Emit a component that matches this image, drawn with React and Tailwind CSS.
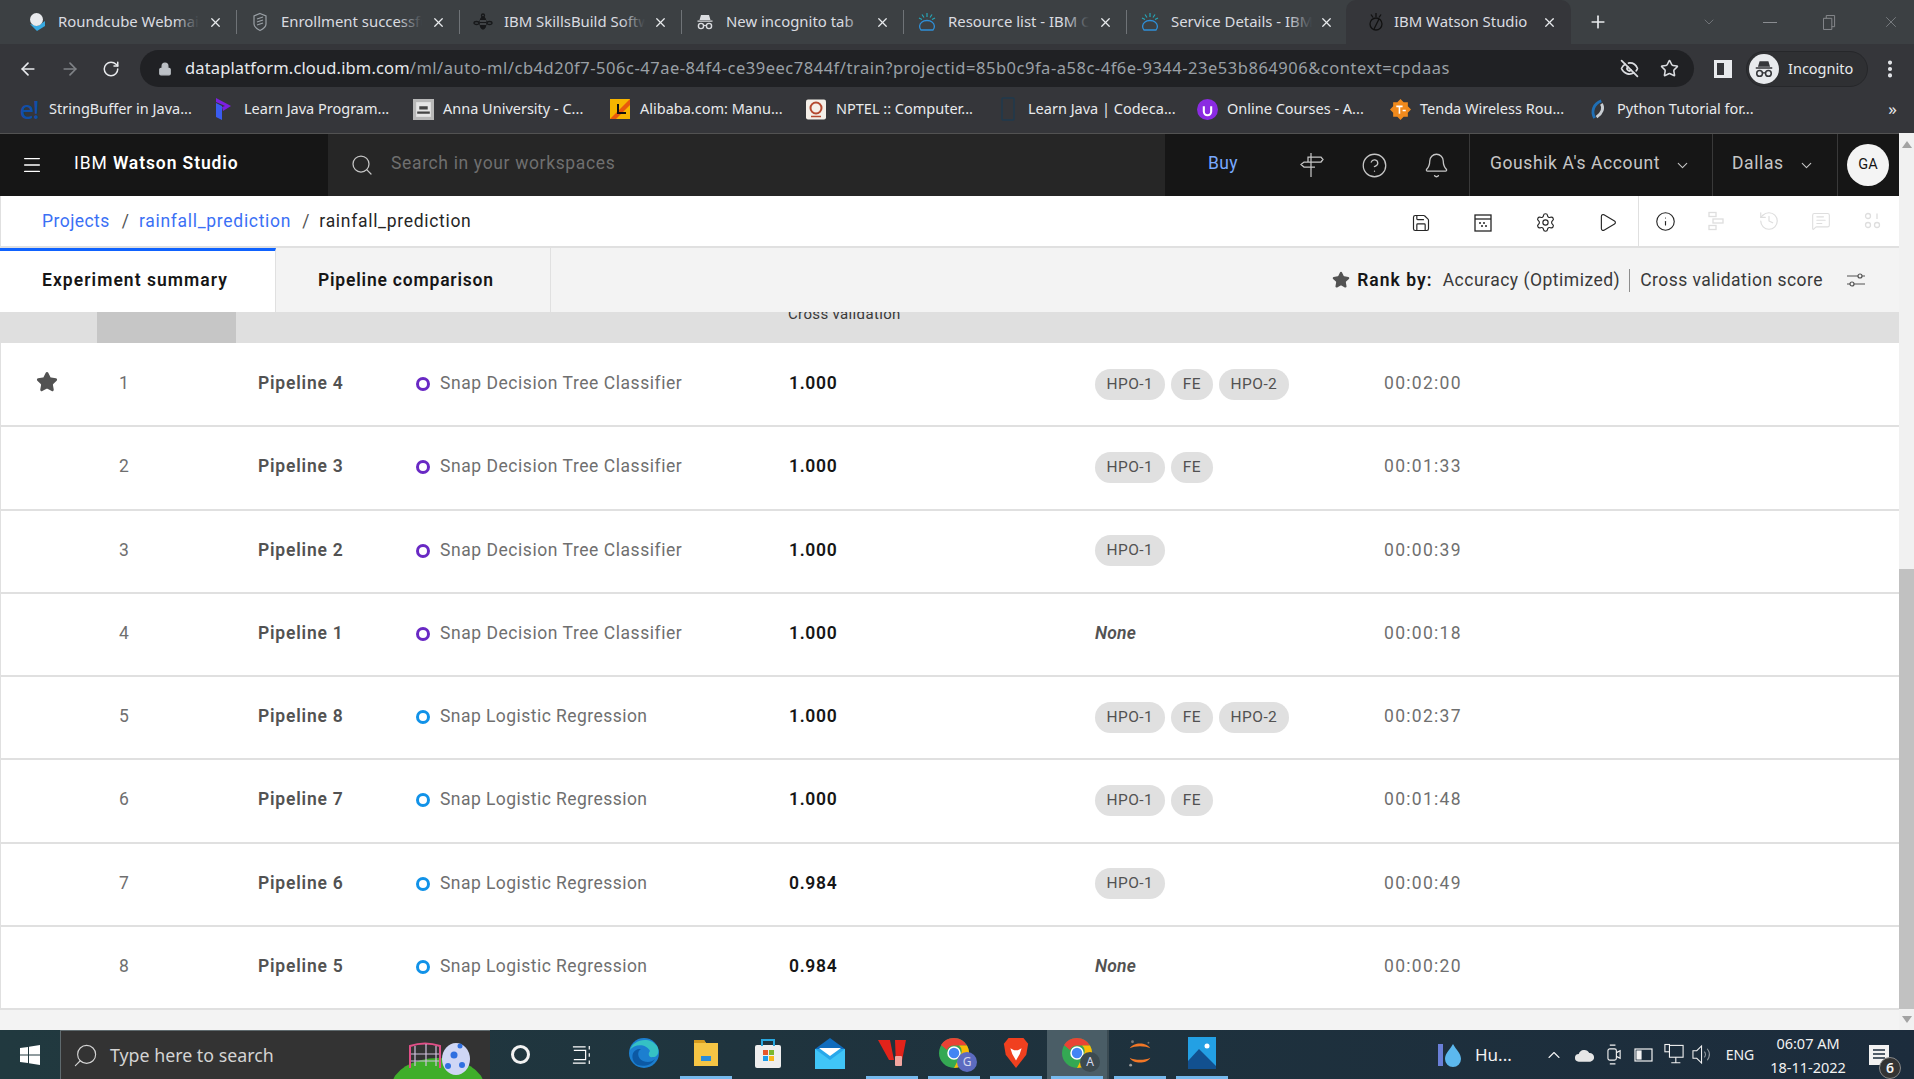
import {
  ArrowLeft,
  ArrowRight,
  Bell,
  ChevronDown,
  CircleHelp,
  EyeOff,
  History,
  Info,
  Lock,
  Menu,
  MessageSquareText,
  MoreVertical,
  Play,
  Plus,
  RotateCw,
  Save,
  Search,
  Settings,
  Star,
  X,
} from 'lucide-react'

const ui = 'font-["Noto_Sans",sans-serif]'
const plex = 'font-["Roboto",sans-serif]'

const IncognitoMark = ({ className, fg = '#dadce0' }) => (
  <svg viewBox="0 0 20 20" className={className} fill="none">
    <path d="M6 3h8l1.5 5h-11z M2.5 8.5h15v1.2h-15z" fill={fg} />
    <circle cx="6" cy="14" r="2.6" stroke={fg} strokeWidth="1.4" />
    <circle cx="14" cy="14" r="2.6" stroke={fg} strokeWidth="1.4" />
    <path d="M8.5 13.5h3" stroke={fg} strokeWidth="1.2" />
  </svg>
)

const CloudFav = () => (
  <svg viewBox="0 0 20 20" className="w-5 h-5" fill="none">
    <path d="M4 18h12c2-2 2-6-1-8-2-2-8-2-10 0-3 2-3 6-1 8z" stroke="#2f8fd8" strokeWidth="1.3" />
    <path d="M10 1v4M5 2.5l2 3M15 2.5l-2 3M2 6l3 1.5M18 6l-3 1.5" stroke="#26a6b8" strokeWidth="1.2" />
  </svg>
)

const tabs = [
  {
    title: 'Roundcube Webmail',
    w: 'w-[223px]',
    icon: (
      <svg viewBox="0 0 20 20" className="w-5 h-5">
        <path d="M3 12l7 7 8-5V9l-7 5z" fill="#37a9e1" />
        <circle cx="9.5" cy="7.5" r="6.5" fill="#e8eaed" />
      </svg>
    ),
  },
  {
    title: 'Enrollment successful',
    w: 'w-[223px]',
    icon: (
      <svg viewBox="0 0 20 20" className="w-5 h-5" fill="none" stroke="#9aa0a6" strokeWidth="1.2">
        <path d="M10 1.5l6 2.5v8c0 3-3 5-6 6.5-3-1.500-6-3.500-6-6.500V4z" />
        <path d="M7 7l6-2M7 10l6-2M7 13l6-2" />
      </svg>
    ),
  },
  {
    title: 'IBM SkillsBuild Software',
    w: 'w-[222px]',
    icon: (
      <svg viewBox="0 0 20 20" className="w-5 h-5" fill="none" stroke="#17181a" strokeWidth="1.300">
        <ellipse cx="10" cy="11" rx="3" ry="6" fill="#17181a" />
        <circle cx="10" cy="3.500" r="1.500" />
        <ellipse cx="3.500" cy="11" rx="2.500" ry="1.500" />
        <ellipse cx="16.500" cy="11" rx="2.500" ry="1.500" />
        <path d="M7 9h6M7 12h6" stroke="#6b6f73" strokeWidth="1" />
      </svg>
    ),
  },
  { title: 'New incognito tab', w: 'w-[222px]', icon: <IncognitoMark className="w-5 h-5" /> },
  { title: 'Resource list - IBM Cloud', w: 'w-[223px]', icon: <CloudFav /> },
  { title: 'Service Details - IBM Cloud', w: 'w-[221px]', icon: <CloudFav /> },
]

const bookmarks = [
  {
    label: 'StringBuffer in Java...',
    w: 'w-[195px]',
    icon: <span className={`${ui} text-[#0f4fa8] text-[25px] leading-none font-medium tracking-tighter`}>e!</span>,
  },
  {
    label: 'Learn Java Program...',
    w: 'w-[199px]',
    icon: (
      <svg viewBox="0 0 20 24" className="w-[20px] h-[24px]">
        <path d="M2 1l15 8-8 5-1-4 3-1-9-4z" fill="#7c1fe0" />
        <path d="M2 6l6 3v14l-6-3z" fill="#3a5cf0" />
      </svg>
    ),
  },
  {
    label: 'Anna University - C...',
    w: 'w-[197px]',
    icon: (
      <svg viewBox="0 0 20 20" className="w-[21px] h-[21px]">
        <rect width="20" height="20" fill="#b8b8b8" />
        <rect x="3" y="3" width="14" height="14" fill="#e5e5e5" />
        <path d="M6 7h8v3H6zM4 12h12v2H4z" fill="#444" />
      </svg>
    ),
  },
  {
    label: 'Alibaba.com: Manu...',
    w: 'w-[196px]',
    icon: (
      <svg viewBox="0 0 20 20" className="w-[20px] h-[20px]">
        <rect width="20" height="20" fill="#f7b500" />
        <path d="M0 20L20 0v6L6 20z" fill="#e8590c" />
        <path d="M8 5v9h8" fill="none" stroke="#111" strokeWidth="2" />
      </svg>
    ),
  },
  {
    label: 'NPTEL :: Computer...',
    w: 'w-[192px]',
    icon: (
      <svg viewBox="0 0 20 20" className="w-[20px] h-[21px]">
        <rect width="20" height="20" rx="2" fill="#f4efe8" />
        <circle cx="10" cy="8.500" r="5.500" fill="none" stroke="#b4492f" strokeWidth="2" />
        <path d="M5 17h10" stroke="#b4492f" strokeWidth="1.500" />
      </svg>
    ),
  },
  {
    label: 'Learn Java | Codeca...',
    w: 'w-[199px]',
    icon: (
      <svg viewBox="0 0 16 24" className="w-[16px] h-[24px]" fill="none" stroke="#1f3a4d" strokeWidth="1.500">
        <rect x="2" y="1" width="12" height="22" rx="1" />
      </svg>
    ),
  },
  {
    label: 'Online Courses - A...',
    w: 'w-[193px]',
    icon: (
      <svg viewBox="0 0 20 20" className="w-[21px] h-[21px]">
        <circle cx="10" cy="10" r="10" fill="#8b2be2" />
        <path d="M6.500 7v5a3.500 3.500 0 007 0V7" fill="none" stroke="#fff" strokeWidth="2" />
      </svg>
    ),
  },
  {
    label: 'Tenda Wireless Rou...',
    w: 'w-[197px]',
    icon: (
      <svg viewBox="0 0 20 20" className="w-[21px] h-[21px]">
        <path d="M10 0l3 3 4 0 0 4 3 3-3 3 0 4-4 0-3 3-3-3-4 0 0-4-3-3 3-3 0-4 4 0z" fill="#f08a1d" />
        <path d="M6 7h6M9 7v7M12 11h3" stroke="#fff" strokeWidth="1.500" fill="none" />
      </svg>
    ),
  },
  {
    label: 'Python Tutorial for...',
    w: 'w-[200px]',
    icon: (
      <svg viewBox="0 0 20 24" className="w-[19px] h-[23px]" fill="none" strokeWidth="3">
        <path d="M14 3C6 6 3 14 7 21" stroke="#1f6fb5" />
        <path d="M14 6c3 4 1 10-5 14" stroke="#c9ced3" />
      </svg>
    ),
  },
]

const rows = [
  { n: 1, name: 'Pipeline 4', kind: 'tree', score: '1.000', chips: ['HPO-1', 'FE', 'HPO-2'], time: '00:02:00', star: true },
  { n: 2, name: 'Pipeline 3', kind: 'tree', score: '1.000', chips: ['HPO-1', 'FE'], time: '00:01:33' },
  { n: 3, name: 'Pipeline 2', kind: 'tree', score: '1.000', chips: ['HPO-1'], time: '00:00:39' },
  { n: 4, name: 'Pipeline 1', kind: 'tree', score: '1.000', chips: [], time: '00:00:18' },
  { n: 5, name: 'Pipeline 8', kind: 'log', score: '1.000', chips: ['HPO-1', 'FE', 'HPO-2'], time: '00:02:37' },
  { n: 6, name: 'Pipeline 7', kind: 'log', score: '1.000', chips: ['HPO-1', 'FE'], time: '00:01:48' },
  { n: 7, name: 'Pipeline 6', kind: 'log', score: '0.984', chips: ['HPO-1'], time: '00:00:49' },
  { n: 8, name: 'Pipeline 5', kind: 'log', score: '0.984', chips: [], time: '00:00:20' },
]

function TabStrip() {
  return (
    <div className={`${ui} flex h-[44px] bg-[#3c4043] pl-[14px] text-[14.900px] text-[#dadce0]`}>
      {tabs.map((t, i) => (
        <div key={t.title} className={`${t.w} relative flex items-center h-full pl-[13px]`}>
          <span className="w-[20px] flex justify-center">{t.icon}</span>
          <span className="ml-[11px] mb-[1px] w-[141px] overflow-hidden whitespace-nowrap relative">
            {t.title}
            <span className="absolute right-0 top-0 bottom-0 w-[24px] bg-gradient-to-l from-[#3c4043] to-transparent" />
          </span>
          <X className="absolute right-[14px] w-[15px] h-[15px] text-[#e8eaed]" strokeWidth={2} />
          {i < 5 && <span className="absolute right-0 top-[10px] bottom-[10px] w-px bg-[#6f7377]" />}
        </div>
      ))}
      <div className="w-[225px] h-full mt-0 bg-[#35363a] rounded-t-[10px] flex items-center pl-[20px] relative ml-[-2px]">
        <svg viewBox="0 0 20 20" className="w-[20px] h-[20px]" fill="none" stroke="#111" strokeWidth="1.300">
          <circle cx="10" cy="12" r="6" />
          <path d="M13 7l-5 10M10 1v4M5 2.500l2 3M15 2.500l-2 3" />
        </svg>
        <span className="ml-[8px] mb-[1px] whitespace-nowrap">IBM Watson Studio</span>
        <X className="absolute right-[14px] w-[15px] h-[15px] text-[#e8eaed]" strokeWidth={2} />
      </div>
      <Plus className="ml-[17px] mt-[12px] w-[20px] h-[20px] text-[#e8eaed]" strokeWidth={2} />
      <div className="ml-auto flex items-center text-[#8a8d91]">
        <ChevronDown className="w-[16px] h-[16px] mr-[46px]" strokeWidth={1} />
        <span className="w-[14px] h-px bg-[#8a8d91] mr-[46px]" />
        <svg viewBox="0 0 14 16" className="w-[13px] h-[15px] mr-[46px]" fill="none" stroke="#8a8d91">
          <path d="M.5 3.500h9v12h-9zM3.500 3.500v-3h9v12h-3" />
        </svg>
        <X className="w-[18px] h-[18px] mr-[14px]" strokeWidth={1} />
      </div>
    </div>
  )
}

function Toolbar() {
  return (
    <div className={`${ui} flex items-center h-[44px] bg-[#35363a] pt-[5px] text-[#e8eaed]`}>
      <ArrowLeft className="ml-[18px] w-[20px] h-[20px]" strokeWidth={2} />
      <ArrowRight className="ml-[22px] w-[20px] h-[20px] text-[#7f8286]" strokeWidth={2} />
      <RotateCw className="ml-[22px] w-[18px] h-[18px]" strokeWidth={2} />
      <div className="ml-[20px] w-[1554px] h-[37px] rounded-full bg-[#202124] flex items-center pl-[18px]">
        <Lock className="w-[14px] h-[14px] text-[#bdc1c6] fill-[#bdc1c6]" strokeWidth={2} />
        <span className="ml-[13px] whitespace-nowrap text-[16.500px] tracking-[0.14px]">
          dataplatform.cloud.ibm.com
          <span className="text-[#9aa0a6] tracking-[0.52px]">/ml/auto-ml/cb4d20f7-506c-47ae-84f4-ce39eec7844f/train?projectid=85b0c9fa-a58c-4f6e-9344-23e53b864906&context=cpdaas</span>
        </span>
        <div className="ml-auto flex items-center pr-[15px] gap-[21px]">
          <EyeOff className="w-[19px] h-[19px] text-[#dadce0]" strokeWidth={2.200} />
          <Star className="w-[19px] h-[19px] text-[#dadce0]" strokeWidth={2} />
        </div>
      </div>
      <span className="ml-[20px] w-[18px] h-[18px] border-[3px] border-[#e8eaed] border-r-[8px]" />
      <div className="ml-[14px] h-[36px] w-[122px] rounded-full flex items-center bg-[#2f3033] border border-[#26272a]">
        <span className="ml-[2px] w-[30px] h-[30px] rounded-full bg-[#e8eaed] flex items-center justify-center">
          <IncognitoMark className="w-[22px] h-[22px]" fg="#35363a" />
        </span>
        <span className="ml-[9px] text-[14.500px]">Incognito</span>
      </div>
      <MoreVertical className="ml-[11px] w-[22px] h-[22px]" strokeWidth={2.500} />
    </div>
  )
}

function BookmarkBar() {
  return (
    <div className={`${ui} flex items-center h-[42px] bg-[#35363a] pl-[18px] text-[14.500px] text-[#e8eaed]`}>
      {bookmarks.map((b) => (
        <div key={b.label} className={`${b.w} flex items-center shrink-0`}>
          <span className="w-[22px] flex justify-center">{b.icon}</span>
          <span className="ml-[9px] whitespace-nowrap">{b.label}</span>
        </div>
      ))}
      <span className="ml-auto mr-[17px] text-[17px]">»</span>
    </div>
  )
}

function AppHeader() {
  return (
    <div className={`${plex} flex h-[63px] shrink-0 bg-[#161616] text-[#c6c6c6] text-[17.500px] border-t border-[#525252]`}>
      <div className="w-[328px] flex items-center pl-[21px] text-white">
        <Menu className="w-[22px] h-[22px]" strokeWidth={1.500} />
        <span className="ml-[31px] mb-[3px] whitespace-nowrap tracking-[0.9px]">
          IBM <span className="font-semibold">Watson Studio</span>
        </span>
      </div>
      <div className="w-[837px] bg-[#262626] flex items-center pl-[22px] text-[#6f6f6f]">
        <Search className="w-[24px] h-[24px] text-[#c6c6c6]" strokeWidth={1.250} />
        <span className="ml-[17px] mb-[3px] tracking-[0.65px]">Search in your workspaces</span>
      </div>
      <div className="flex-1 flex items-stretch">
        <div className="w-[305px] flex items-center border-r border-[#393939]">
          <span className="ml-[43px] mb-[3px] tracking-[0.4px] text-[#78a9ff]">Buy</span>
          <svg viewBox="0 0 24 26" className="ml-[62px] w-[24px] h-[26px]" fill="none" stroke="currentColor" strokeWidth="1.250">
            <path d="M11 1v24" />
            <path d="M8 5h13l2 2.500-2 2.500H8zM15 10H4l-3 2.500L4 15h11" />
          </svg>
          <CircleHelp className="ml-[37px] w-[27px] h-[27px]" strokeWidth={1.150} />
          <Bell className="ml-[35px] w-[27px] h-[27px]" strokeWidth={1.150} />
        </div>
        <div className="w-[243px] flex items-center pl-[20px] border-r border-[#393939] whitespace-nowrap tracking-[0.6px]">
          <span className="mb-[3px]">Goushik A's Account</span>
          <ChevronDown className="ml-[14px] w-[17px] h-[17px]" strokeWidth={1.500} />
        </div>
        <div className="w-[125px] flex items-center pl-[19px] border-r border-[#393939] tracking-[0.6px]">
          <span className="mb-[3px]">Dallas</span>
          <ChevronDown className="ml-[14px] w-[17px] h-[17px]" strokeWidth={1.500} />
        </div>
        <div className="flex-1 flex items-center pl-[9px]">
          <span className="w-[42px] h-[42px] rounded-full bg-[#f4f4f4] text-[#161616] text-[14.500px] flex items-center justify-center">GA</span>
        </div>
      </div>
    </div>
  )
}

function Breadcrumb() {
  return (
    <div className={`${plex} flex items-center h-[52px] shrink-0 bg-white border-l border-[#e0e0e0] border-b-2 text-[17.500px]`}>
      <span className="ml-[41px] text-[#3b70f5] tracking-[0.45px]">Projects</span>
      <span className="ml-[12px] text-[#525252]">/</span>
      <span className="ml-[10px] text-[#3b70f5] tracking-[0.7px]">rainfall_prediction</span>
      <span className="ml-[11px] text-[#525252]">/</span>
      <span className="ml-[10px] text-[#262626] tracking-[0.7px]">rainfall_prediction</span>
      <div className="ml-auto flex h-full items-center text-[#262626]">
        <span className="w-[62px] flex justify-center mt-[3px]"><Save className="w-[20px] h-[20px]" strokeWidth={1.400} /></span>
        <span className="w-[62px] flex justify-center mt-[3px]">
          <svg viewBox="0 0 20 20" className="w-[20px] h-[20px]" fill="none" stroke="currentColor" strokeWidth="1.300">
            <rect x="2" y="2" width="16" height="16" />
            <path d="M2 6h16" />
            <path d="M6 10h2M10 10h2M8 13h2M12 13h2" strokeWidth="1.500" />
          </svg>
        </span>
        <span className="w-[62px] flex justify-center mt-[3px]"><Settings className="w-[21px] h-[21px]" strokeWidth={1.300} /></span>
        <span className="w-[62px] flex justify-center mt-[3px]"><Play className="w-[21px] h-[21px]" strokeWidth={1.300} /></span>
        <div className="flex h-full items-center border-l border-[#e0e0e0] text-[#dedede]">
          <span className="w-[52px] flex justify-center text-[#262626]"><Info className="w-[21px] h-[21px]" strokeWidth={1.300} /></span>
          <span className="w-[52px] flex justify-center">
            <svg viewBox="0 0 20 20" className="w-[20px] h-[20px]" fill="none" stroke="currentColor" strokeWidth="1.300">
              <rect x="2" y="1.500" width="7" height="4" />
              <rect x="6" y="8" width="10" height="4" />
              <rect x="2" y="14.500" width="7" height="4" />
            </svg>
          </span>
          <span className="w-[52px] flex justify-center"><History className="w-[22px] h-[22px]" strokeWidth={1.300} /></span>
          <span className="w-[52px] flex justify-center"><MessageSquareText className="w-[20px] h-[20px]" strokeWidth={1.300} /></span>
          <span className="w-[52px] flex justify-center">
            <svg viewBox="0 0 20 20" className="w-[20px] h-[20px]" fill="none" stroke="currentColor" strokeWidth="1.300">
              <circle cx="5" cy="5" r="2.500" />
              <path d="M14 2.500V8" />
              <circle cx="5" cy="14" r="2.500" />
              <circle cx="14" cy="14" r="2.500" />
            </svg>
          </span>
        </div>
      </div>
    </div>
  )
}

function TabsRow() {
  return (
    <div className={`${plex} flex items-stretch h-[64px] shrink-0 bg-[#f3f3f3] text-[17.500px]`}>
      <div className="w-[276px] bg-white border-t-[3px] border-[#0f62fe] border-r border-r-[#e0e0e0] flex items-center pl-[42px] pb-[3px] font-semibold text-[#161616] whitespace-nowrap tracking-[1.05px]">
        Experiment summary
      </div>
      <div className="w-[275px] border-r border-[#e0e0e0] flex items-center pl-[42px] font-semibold text-[#161616] whitespace-nowrap tracking-[0.8px]">
        Pipeline comparison
      </div>
      <div className="ml-auto flex items-center text-[#393939] whitespace-nowrap">
        <Star className="w-[18px] h-[18px] fill-[#525252] text-[#525252]" />
        <span className="ml-[7px] font-semibold text-[#161616] tracking-[1.05px]">Rank by:</span>
        <span className="ml-[10px] tracking-[0.5px]">Accuracy (Optimized)</span>
        <span className="ml-[9px] w-px h-[23px] bg-[#8d8d8d]" />
        <span className="ml-[10px] tracking-[0.47px]">Cross validation score</span>
        <svg viewBox="0 0 20 20" className="ml-[23px] mr-[33px] w-[20px] h-[20px]" fill="none" stroke="#525252" strokeWidth="1.200">
          <path d="M1 6h11M16 6h3M1 14h3M8 14h11" />
          <circle cx="14" cy="6" r="2" />
          <circle cx="6" cy="14" r="2" />
        </svg>
      </div>
    </div>
  )
}

function PipelineRow({ row }) {
  const isTree = row.kind === 'tree'
  return (
    <div className="flex items-center h-[83.250px] pb-[3px] bg-white border-l border-[#e0e0e0] border-b-2 shrink-0">
      <div className="w-[118px] pl-[35px] shrink-0">
        {row.star && <Star className="w-[22px] h-[22px] mb-[2px] fill-[#525252] text-[#525252]" />}
      </div>
      <div className="w-[139px] shrink-0 text-[#6f6f6f]">{row.n}</div>
      <div className="w-[157px] shrink-0 font-semibold text-[#525252] tracking-[0.8px]">{row.name}</div>
      <div className="w-[374px] shrink-0 flex items-center text-[#6f6f6f]">
        <span
          className={
            isTree
              ? 'ml-[1px] w-[14px] h-[14px] rounded-full border-[3px] border-[#6929c4] mt-[2px]'
              : 'ml-[1px] w-[14px] h-[14px] rounded-full border-[3px] border-[#1192e8] mt-[2px]'
          }
        />
        <span className={isTree ? 'ml-[10px] tracking-[0.55px]' : 'ml-[10px] tracking-[0.45px]'}>
          {isTree ? 'Snap Decision Tree Classifier' : 'Snap Logistic Regression'}
        </span>
      </div>
      <div className="w-[306px] shrink-0 font-semibold text-[#161616] tracking-[0.7px]">{row.score}</div>
      <div className="w-[289px] shrink-0 flex gap-[6.500px]">
        {row.chips.length === 0 && <span className="italic font-semibold text-[#525252]">None</span>}
        {row.chips.map((c) => (
          <span key={c} className="h-[31px] mt-[2px] px-[11.500px] rounded-full bg-[#e0e0e0] text-[#525252] text-[15.500px] tracking-[0.45px] flex items-center">
            {c}
          </span>
        ))}
      </div>
      <div className="text-[#6f6f6f] tracking-[1.3px]">{row.time}</div>
    </div>
  )
}

function PipelineTable() {
  return (
    <div className={`${plex} flex-1 min-h-0 flex flex-col bg-[#f3f3f3] text-[17.500px] tracking-[0.2px]`}>
      <div className="flex h-[31px] bg-[#dfdfdf] overflow-hidden shrink-0">
        <div className="w-[97px]" />
        <div className="w-[139px] bg-[#c6c6c6]" />
        <div className="ml-[552px] mt-[-8px] text-[15px] leading-[20px] tracking-[0.35px] text-[#393939]">Cross validation</div>
      </div>
      <div className="h-[1px] bg-white border-l border-[#e0e0e0] shrink-0" />
      {rows.map((r) => (
        <PipelineRow key={r.n} row={r} />
      ))}
    </div>
  )
}

function Scrollbar() {
  return (
    <div className="w-[15px] shrink-0 bg-[#f1f1f1] flex flex-col items-center">
      <span className="mt-[8px] w-0 h-0 border-x-[5px] border-x-transparent border-b-[7px] border-b-[#a3a3a3]" />
      <span className="flex-1" />
      <span className="w-full h-[440px] bg-[#c1c1c1]" />
      <span className="mt-[7px] mb-[7px] w-0 h-0 border-x-[5px] border-x-transparent border-t-[7px] border-t-[#a3a3a3]" />
    </div>
  )
}

const apps = [
  {
    key: 'edge',
    icon: (
      <svg viewBox="0 0 32 32" className="w-[32px] h-[32px]">
        <circle cx="16" cy="16" r="15" fill="#1c7fd0" />
        <path d="M2 13C5 2 22-1 29 9c3 5 1 11-4 11-5 1-5-4-3-6C18 6 6 7 2 13z" fill="#35c1c4" />
        <path d="M27 22c-4 8-17 9-21 3-4-7 0-14 7-13-4 2-4 9 2 12 5 2 9 1 12-2z" fill="#0c59a4" />
      </svg>
    ),
  },
  {
    key: 'files',
    bar: true,
    icon: (
      <svg viewBox="0 0 30 30" className="w-[30px] h-[30px]">
        <path d="M3 2h10l2 3h12v23H3z" fill="#f6c544" />
        <path d="M3 2h10l2 3H3z" fill="#d69a1d" />
        <path d="M10 23h10v-5h-10z" fill="#2a8cdb" />
      </svg>
    ),
  },
  {
    key: 'store',
    icon: (
      <svg viewBox="0 0 30 30" className="w-[30px] h-[32px]">
        <rect x="2" y="7" width="26" height="23" rx="2" fill="#eee" />
        <path d="M9 8V2h12v6" fill="none" stroke="#29a8e0" strokeWidth="2" />
        <rect x="10" y="12" width="5" height="5" fill="#e8562a" />
        <rect x="16" y="12" width="5" height="5" fill="#7cb82f" />
        <rect x="10" y="18" width="5" height="5" fill="#1f9be8" />
        <rect x="16" y="18" width="5" height="5" fill="#f8b71c" />
      </svg>
    ),
  },
  {
    key: 'mail',
    icon: (
      <svg viewBox="0 0 30 32" className="w-[30px] h-[32px]">
        <path d="M15 1L30 12v20H0V12z" fill="#0f6cbd" />
        <path d="M0 12h30v20H0z" fill="#28a8ea" />
        <path d="M0 12l15 11 15-11v20H0z" fill="#50d9ff" opacity=".6" />
        <path d="M4 11h22l-11 8z" fill="#fff" />
      </svg>
    ),
  },
  {
    key: 'pdf',
    bar: true,
    icon: (
      <svg viewBox="0 0 32 32" className="w-[32px] h-[32px]">
        <path d="M2 3h12l4 20h-5zM19 3h11l-5 26h-5z" fill="#e2231a" />
        <rect x="19" y="19" width="7" height="10" rx="1" fill="#f2a6a0" />
      </svg>
    ),
  },
  { key: 'chrome-g', bar: true, letter: 'G', badge: 'bg-[#5c6bc0]' },
  {
    key: 'brave',
    bar: true,
    icon: (
      <svg viewBox="0 0 30 34" className="w-[28px] h-[32px]">
        <path d="M7 1h16l5 6-2 12-11 14L4 19 2 7z" fill="#f0401f" />
        <path d="M9 12l4 2h4l4-2-2 6-4 7-4-7z" fill="#fff" />
      </svg>
    ),
  },
  { key: 'chrome-a', bar: true, active: true, letter: 'A', badge: 'bg-[#3c4a50]' },
  {
    key: 'jupyter',
    bar: true,
    icon: (
      <svg viewBox="0 0 32 32" className="w-[30px] h-[30px]" fill="#f37726">
        <path d="M5 11c4-7 18-7 22 0-5-3-17-3-22 0zM5 21c4 7 18 7 22 0-5 3-17 3-22 0z" />
        <circle cx="8" cy="4" r="1.500" fill="#767677" />
        <circle cx="25" cy="5" r="1" fill="#767677" />
        <circle cx="6" cy="29" r="1.500" fill="#9e9e9e" />
      </svg>
    ),
  },
  {
    key: 'photos',
    bar: true,
    icon: (
      <svg viewBox="0 0 28 32" className="w-[28px] h-[32px]">
        <rect width="28" height="32" fill="#23a0e4" />
        <path d="M0 32V24l11-12 17 17v3z" fill="#12508f" />
        <circle cx="19" cy="9" r="2.500" fill="#fff" />
      </svg>
    ),
  },
]

function ChromeIcon({ letter, badge }) {
  return (
    <span className="relative w-[32px] h-[32px] flex">
      <svg viewBox="0 0 32 32" className="w-[32px] h-[32px]">
        <circle cx="16" cy="16" r="15" fill="#34a853" />
        <path d="M16 1a15 15 0 0113 7.500H16A7.500 7.500 0 009 13L3 8A15 15 0 0116 1z" fill="#ea4335" />
        <path d="M29 8.500A15 15 0 0116 31l6-12a7.500 7.500 0 00-1-10.500z" fill="#fbbc05" />
        <circle cx="16" cy="16" r="6" fill="#4285f4" stroke="#fff" strokeWidth="1.500" />
      </svg>
      <span className={`${badge} absolute right-[-7px] bottom-[-3px] w-[20px] h-[20px] rounded-full text-[#d5d9ef] text-[12px] flex items-center justify-center`}>
        {letter}
      </span>
    </span>
  )
}

function Taskbar() {
  return (
    <div className={`${ui} flex h-[49px] shrink-0 bg-gradient-to-r from-[#21393f] to-[#1c2c3c] text-white`}>
      <div className="w-[60px] flex items-center justify-center">
        <svg viewBox="0 0 20 20" className="w-[20px] h-[20px]" fill="#fff">
          <path d="M0 3l8-1v7.500H0zM9 1.800L20 0v9.500H9zM0 10.500h8V18l-8-1zM9 10.500h11V20L9 18.200z" />
        </svg>
      </div>
      <div className="relative w-[430px] bg-[#333] border-l border-t border-[#5f6a6e] flex items-center pl-[11px] text-[#d4d4d4] text-[17.800px] overflow-hidden">
        <Search className="w-[27px] h-[27px] scale-x-[-1]" strokeWidth={1} />
        <span className="ml-[11px]">Type here to search</span>
        <svg viewBox="0 0 100 49" className="absolute right-[6px] bottom-0 w-[100px] h-[49px]" fill="none">
          <ellipse cx="54" cy="56" rx="46" ry="28" fill="#3fae2a" />
          <path d="M26 38V16q15-5 30 0v22" stroke="#e04f87" strokeWidth="2" />
          <path d="M31 16v20M42 14v22M52 16v20M27 24h28M27 31h28" stroke="#cfc0dc" strokeWidth="1.200" />
          <ellipse cx="72" cy="29" rx="14" ry="16" fill="#cfd6f5" />
          <circle cx="70" cy="25" r="3.500" fill="#2f6fe0" />
          <circle cx="78" cy="35" r="3" fill="#2f6fe0" />
          <circle cx="64" cy="36" r="3" fill="#2f6fe0" />
          <circle cx="76" cy="16" r="2.500" fill="#2f6fe0" />
        </svg>
      </div>
      <div className="w-[60px] flex items-center justify-center">
        <span className="w-[19px] h-[19px] rounded-full border-[3px] border-[#f2f2f2]" />
      </div>
      <div className="w-[63px] flex items-center justify-center">
        <svg viewBox="0 0 22 24" className="w-[20px] h-[22px]" fill="none" stroke="#fff" strokeWidth="1.300">
          <path d="M2 7h13v10H2M1 3h14M1 21h14M19 2v4M19 10v4M19 18v4" />
        </svg>
      </div>
      {apps.map((a) => (
        <div
          key={a.key}
          className={
            a.active
              ? 'w-[62px] h-full flex flex-col items-center bg-[#4a5d66] border-r-2 border-[#3a4a52]'
              : 'w-[62px] h-full flex flex-col items-center'
          }
        >
          <span className="flex-1 flex items-center">
            {a.letter ? <ChromeIcon letter={a.letter} badge={a.badge} /> : a.icon}
          </span>
          <span className={a.bar ? 'w-[52px] h-[3px] bg-[#76b9ed]' : 'w-[52px] h-[3px]'} />
        </div>
      ))}
      <div className="ml-auto flex items-center text-[#f2f2f2]">
        <div className="w-[103px] flex items-center pl-[2px]">
          <svg viewBox="0 0 26 26" className="w-[26px] h-[26px] mr-[11px]">
            <rect x="0" y="2" width="5" height="22" fill="#6a7fd8" />
            <path d="M15 2c3 6 8 9 8 15a8 8 0 01-16 0c0-6 5-9 8-15z" fill="#5cb8ee" />
          </svg>
          <span className="text-[17px]">Hu...</span>
        </div>
        <span className="w-[30px] flex justify-center">
          <ChevronDown className="w-[20px] h-[20px] rotate-180" strokeWidth={1.300} />
        </span>
        <span className="w-[30px] flex justify-center">
          <svg viewBox="0 0 22 16" className="w-[21px] h-[16px]">
            <path d="M5 15a4 4 0 010-8 6 6 0 0111-1 4.500 4.500 0 011 9z" fill="#e6e6e6" />
          </svg>
        </span>
        <span className="w-[30px] flex justify-center">
          <svg viewBox="0 0 16 24" className="w-[15px] h-[23px]" fill="none" stroke="#f2f2f2" strokeWidth="1.200">
            <rect x="1" y="6" width="9" height="12" rx="2" />
            <path d="M10 10l4-2v8l-4-2M3 2h6M3 22h6" />
          </svg>
        </span>
        <span className="w-[30px] flex justify-center">
          <svg viewBox="0 0 20 14" className="w-[20px] h-[14px]" fill="none" stroke="#f2f2f2" strokeWidth="1.200">
            <rect x="1" y="1" width="17" height="12" />
            <rect x="3" y="3" width="4" height="8" fill="#f2f2f2" />
          </svg>
        </span>
        <span className="w-[29px] flex justify-center">
          <svg viewBox="0 0 22 24" className="w-[20px] h-[23px]" fill="none" stroke="#f2f2f2" strokeWidth="1.200">
            <rect x="6" y="2" width="15" height="13" />
            <rect x="1" y="1" width="5" height="8" fill="#1c2c3c" />
            <path d="M13 15v6M8 21h10" />
          </svg>
        </span>
        <span className="w-[28px] flex justify-center">
          <svg viewBox="0 0 22 24" className="w-[21px] h-[23px]" fill="none" stroke="#f2f2f2" strokeWidth="1.100">
            <path d="M1 8h4l5-5v18l-5-5H1z" />
            <path d="M13 9c1.500 2 1.500 4 0 6M16 6c3 4 3 8 0 12" opacity=".55" />
          </svg>
        </span>
        <span className="w-[48px] text-center text-[14px]">ENG</span>
        <div className="w-[88px] flex flex-col items-center text-[14.500px] leading-[24px]">
          <span>06:07 AM</span>
          <span>18-11-2022</span>
        </div>
        <div className="relative w-[54px] mr-[8px] flex justify-center">
          <svg viewBox="0 0 20 20" className="w-[20px] h-[20px]" fill="#f2f2f2">
            <path d="M0 0h20v20H0z" />
            <path d="M4 5h12M4 9h12M4 13h12" stroke="#1c2c3c" strokeWidth="1.300" />
          </svg>
          <span className="absolute right-[5px] bottom-[-14px] w-[22px] h-[22px] rounded-full bg-[#333] border border-[#888] text-[14px] font-semibold flex items-center justify-center">6</span>
        </div>
      </div>
    </div>
  )
}

export default function App() {
  return (
    <div className="w-[1914px] h-[1079px] overflow-hidden flex flex-col bg-white">
      <TabStrip />
      <Toolbar />
      <BookmarkBar />
      <div className="h-[3px] bg-[#35363a] shrink-0" />
      <div className="flex-1 min-h-0 flex">
        <main className="flex-1 min-w-0 flex flex-col">
          <AppHeader />
          <Breadcrumb />
          <TabsRow />
          <PipelineTable />
        </main>
        <Scrollbar />
      </div>
      <Taskbar />
    </div>
  )
}
